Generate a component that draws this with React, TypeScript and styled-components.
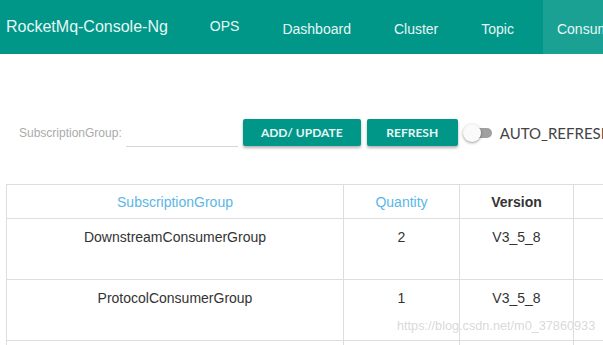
import styled, { createGlobalStyle } from "styled-components"

const Global = createGlobalStyle`
body {
    margin: 0;
    background: #fff;
    font-family: "Liberation Sans", Arial, sans-serif;
    overflow: hidden;
}
`

const Pagina = styled.div`
position: relative;
width: 603px;
height: 345px;
overflow: hidden;
`

const BarraTopo = styled.header`
display: flex;
align-items: stretch;
height: 54px;
background-color: #009688;
`

const Marca = styled.div`
display: flex;
align-items: center;
padding: 0 6px;
margin-right: 22px;
font-size: 16px;
color: #e6f7f5;
white-space: nowrap;
`

const Menu = styled.nav`
display: flex;
gap: 15px;
`

const ItemMenu = styled.div<{ ativo?: boolean, subir?: boolean }>`
display: flex;
align-items: center;
padding: ${props => props.subir ? '0 14px 2px' : '4px 14px 0'};
font-size: 14px;
color: #e6f7f5;
white-space: nowrap;
background-color: ${props => props.ativo ? '#1ba194' : 'transparent'};
`

const Conteudo = styled.main`
padding: 65px 0 0 6px;
`

const Filtro = styled.div`
display: flex;
align-items: center;
height: 27px;
padding-left: 13px;
& > * {
    flex-shrink: 0;
}
`

const Rotulo = styled.label`
font-size: 12px;
color: #aaaaaa;
margin-right: 4px;
white-space: nowrap;
`

const Campo = styled.input`
width: 112px;
height: 20px;
border: none;
border-bottom: 1px solid #d6d6d6;
outline: none;
padding: 0;
margin: 7px 5px 0 0;
background: transparent;
`

const Botao = styled.button<{ largura: number }>`
width: ${props => props.largura}px;
height: 27px;
padding: 0;
margin-right: 6px;
border: none;
border-radius: 2px;
background-color: #009688;
color: #e6f7f5;
font-family: Lato, "Liberation Sans", sans-serif;
font-size: 12px;
font-weight: 700;
box-shadow: 0 2px 3px rgba(0, 0, 0, 0.3);
white-space: nowrap;
`

const Chave = styled.span`
position: relative;
display: inline-block;
width: 30px;
height: 18px;
margin: 0 7px 0 -1px;
&::before {
    content: '';
    position: absolute;
    left: 6px;
    top: 4px;
    width: 23px;
    height: 10px;
    border-radius: 5px;
    background: #a0a0a0;
}
&::after {
    content: '';
    position: absolute;
    left: 0;
    top: 0;
    width: 18px;
    height: 18px;
    border-radius: 50%;
    background: #fafafa;
    box-shadow: 0 1px 3px rgba(0, 0, 0, 0.4);
}
`

const TextoChave = styled.span`
font-family: Lato, "Liberation Sans", sans-serif;
font-size: 15px;
color: #444;
white-space: nowrap;
`

const Tabela = styled.table`
margin-top: 38px;
border-collapse: collapse;
table-layout: fixed;
width: 900px;
font-size: 14px;
color: #333;
`

const Cabecalho = styled.th<{ azul?: boolean }>`
height: 33px;
padding: 0;
border: 1px solid #dddddd;
font-weight: ${props => props.azul ? 400 : 700};
color: ${props => props.azul ? '#5bb6e6' : '#333'};
text-align: center;
vertical-align: middle;
`

const Celula = styled.td`
height: 46px;
border: 1px solid #dddddd;
text-align: center;
vertical-align: top;
padding: 10px 0 4px;
`

const MarcaDagua = styled.div`
position: absolute;
left: 397px;
top: 319px;
font-size: 12.7px;
color: rgba(195, 195, 195, 0.65);
text-shadow: 0 0 1px rgba(255, 255, 255, 0.8);
white-space: nowrap;
pointer-events: none;
`

const grupos = [
    { nome: 'DownstreamConsumerGroup', quantidade: 2, versao: 'V3_5_8' },
    { nome: 'ProtocolConsumerGroup', quantidade: 1, versao: 'V3_5_8' },
]

export default function App() {
    return (
        <Pagina>
            <Global />
            <BarraTopo>
                <Marca>RocketMq-Console-Ng</Marca>
                <Menu>
                    <ItemMenu subir>OPS</ItemMenu>
                    <ItemMenu>Dashboard</ItemMenu>
                    <ItemMenu>Cluster</ItemMenu>
                    <ItemMenu>Topic</ItemMenu>
                    <ItemMenu ativo>Consumer</ItemMenu>
                    <ItemMenu>Producer</ItemMenu>
                </Menu>
            </BarraTopo>
            <Conteudo>
                <Filtro>
                    <Rotulo>SubscriptionGroup:</Rotulo>
                    <Campo />
                    <Botao largura={118}>ADD/ UPDATE</Botao>
                    <Botao largura={91}>REFRESH</Botao>
                    <Chave />
                    <TextoChave>AUTO_REFRESH</TextoChave>
                </Filtro>
                <Tabela>
                    <colgroup>
                        <col style={{ width: 337 }} />
                        <col style={{ width: 116 }} />
                        <col style={{ width: 114 }} />
                        <col />
                    </colgroup>
                    <thead>
                        <tr>
                            <Cabecalho azul>SubscriptionGroup</Cabecalho>
                            <Cabecalho azul>Quantity</Cabecalho>
                            <Cabecalho>Version</Cabecalho>
                            <Cabecalho>Type</Cabecalho>
                        </tr>
                    </thead>
                    <tbody>
                        {grupos.map(g => (
                            <tr key={g.nome}>
                                <Celula>{g.nome}</Celula>
                                <Celula>{g.quantidade}</Celula>
                                <Celula>{g.versao}</Celula>
                                <Celula>PUSH</Celula>
                            </tr>
                        ))}
                        <tr>
                            <Celula />
                            <Celula />
                            <Celula />
                            <Celula />
                        </tr>
                    </tbody>
                </Tabela>
            </Conteudo>
            <MarcaDagua>https://blog.csdn.net/m0_37860933</MarcaDagua>
        </Pagina>
    )
}
